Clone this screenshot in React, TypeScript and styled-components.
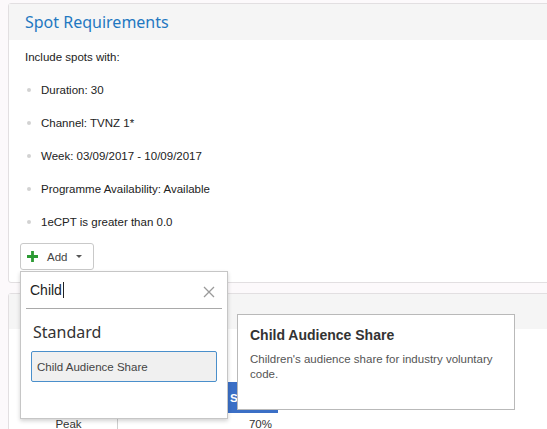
import React from 'react';
import styled, { createGlobalStyle } from 'styled-components';

const GlobalStyle = createGlobalStyle`
  body {
    margin: 0;
    background: #fcf9fb;
    font-family: "Liberation Sans", Arial, sans-serif;
  }
`;

const spotRules = [
  'Duration: 30',
  'Channel: TVNZ 1*',
  'Week: 03/09/2017 - 10/09/2017',
  'Programme Availability: Available',
  '1eCPT is greater than 0.0',
];

// Component
const App: React.FC = () => {
  return (
    <Page>
      <GlobalStyle />
      <Panel height={280}>
        <PanelHeader>
          <Title>Spot Requirements</Title>
        </PanelHeader>
        <PanelBody>
          <Row>Include spots with:</Row>
          {spotRules.map(rule => (
            <Row key={rule}>
              <Bullet />
              {rule}
            </Row>
          ))}
          <AddWrap>
            <AddButton>
              <PlusIcon viewBox="0 0 11 11">
                <path d="M5.5 0V11M0 5.5H11" stroke="#2c9a34" strokeWidth="2.8" />
              </PlusIcon>
              <span>Add</span>
              <Caret />
            </AddButton>
            <Dropdown>
              <SearchRow>
                <SearchText>Child</SearchText>
                <Cursor />
                <CloseIcon viewBox="0 0 12 12">
                  <path d="M1 1L11 11M11 1L1 11" stroke="#9a9a9a" strokeWidth="1.3" />
                </CloseIcon>
              </SearchRow>
              <GroupTitle>Standard</GroupTitle>
              <Option active>Child Audience Share</Option>
              <Tooltip>
                <TooltipTitle>Child Audience Share</TooltipTitle>
                <TooltipText>Children's audience share for industry voluntary code.</TooltipText>
              </Tooltip>
            </Dropdown>
          </AddWrap>
        </PanelBody>
      </Panel>
      <Panel>
        <PanelHeader small>
          <Title>Targets</Title>
        </PanelHeader>
        <Table>
          <HeadCell />
          <HeadCell />
          <HeadCell blue>Share</HeadCell>
          <HeadCell />
          <Cell center>Peak</Cell>
          <Cell divider />
          <Cell right>70%</Cell>
          <Cell />
        </Table>
      </Panel>
    </Page>
  );
};

// Styled Components
const Page = styled.div`
  position: relative;
  height: 429px;
  overflow: hidden;
  padding: 3px 0 0 8px;
  box-sizing: border-box;
`;

const Panel = styled.div<{ height?: number }>`
  width: 570px;
  height: ${({ height }) => (height ? `${height}px` : 'auto')};
  box-sizing: border-box;
  border: 1px solid #e2dfe1;
  border-radius: 3px;
  background: #fff;
  margin-bottom: 10px;
`;

const PanelHeader = styled.div<{ small?: boolean }>`
  height: ${({ small }) => (small ? '35px' : '36px')};
  background: #f5f5f5;
  padding-left: 16px;
  display: flex;
  align-items: center;
`;

const Title = styled.h2`
  margin: 0;
  font-family: "Noto Sans", "Open Sans", sans-serif;
  font-weight: 400;
  font-size: 16px;
  color: #1f78c1;
`;

const PanelBody = styled.div`
  padding: 0 16px;
`;

const Row = styled.div`
  height: 33px;
  display: flex;
  align-items: center;
  font-size: 11.5px;
  color: #222;
`;

const Bullet = styled.span`
  width: 4px;
  height: 4px;
  border-radius: 50%;
  background: #d2d2d2;
  margin: 0 10px 0 2px;
`;

const AddWrap = styled.div`
  position: relative;
  width: 74px;
  margin: 5px 0 0 -5px;
`;

const AddButton = styled.div`
  height: 27px;
  box-sizing: border-box;
  border: 1px solid #c9c9c9;
  border-radius: 3px;
  background: #fff;
  display: flex;
  align-items: center;
  padding-left: 6px;
  font-size: 11.5px;
  color: #444;

  span {
    margin-left: 9px;
  }
`;

const PlusIcon = styled.svg`
  width: 11px;
  height: 11px;
`;

const Caret = styled.span`
  width: 0;
  height: 0;
  border-left: 3px solid transparent;
  border-right: 3px solid transparent;
  border-top: 3px solid #555;
  margin-left: 13px;
`;

const Dropdown = styled.div`
  position: absolute;
  top: 28px;
  left: 0;
  width: 208px;
  height: 148px;
  box-sizing: border-box;
  background: #fff;
  border: 1px solid #c6c6c6;
  box-shadow: 0 2px 4px rgba(0, 0, 0, 0.18);
  padding: 0 5px;
  z-index: 2;
`;

const SearchRow = styled.div`
  height: 36px;
  display: flex;
  align-items: center;
  padding-left: 4px;
  border-bottom: 1px solid #a9a9a9;
`;

const SearchText = styled.span`
  font-size: 14px;
  color: #222;
`;

const Cursor = styled.span`
  width: 1px;
  height: 16px;
  background: #222;
  margin-left: 1px;
`;

const CloseIcon = styled.svg`
  width: 12px;
  height: 12px;
  margin: 3px 7px 0 auto;
`;

const GroupTitle = styled.div`
  font-family: "Noto Sans", "Open Sans", sans-serif;
  font-size: 16px;
  color: #333;
  padding: 12px 0 0 7px;
  line-height: 22px;
`;

const Option = styled.div<{ active?: boolean }>`
  margin: 8px 5px 0 5px;
  height: 31px;
  box-sizing: border-box;
  display: flex;
  align-items: center;
  padding-left: 5px;
  font-size: 11.5px;
  color: #444;
  background: ${({ active }) => (active ? '#f0f0f0' : '#fff')};
  border: 1px solid ${({ active }) => (active ? '#4a8fcb' : 'transparent')};
  border-radius: 2px;
`;

const Tooltip = styled.div`
  position: absolute;
  left: calc(100% + 10px);
  top: 42px;
  width: 278px;
  height: 96px;
  box-sizing: border-box;
  background: #fff;
  border: 1px solid #b9b9b9;
  padding: 12px 12px;
`;

const TooltipTitle = styled.div`
  font-size: 14px;
  font-weight: 700;
  color: #333;
  line-height: 16px;
`;

const TooltipText = styled.div`
  font-size: 11.5px;
  color: #555;
  line-height: 15px;
  margin-top: 9px;
`;

const Table = styled.div`
  display: grid;
  grid-template-columns: 97px 98px 63px 1fr;
  margin: 53px 0 0 11px;
`;

const HeadCell = styled.div<{ blue?: boolean }>`
  height: 31px;
  background: ${({ blue }) => (blue ? '#3b6fc6' : 'transparent')};
  color: #fff;
  font-size: 11.5px;
  font-weight: 700;
  display: flex;
  align-items: center;
  padding-left: 15px;
`;

const Cell = styled.div<{ center?: boolean; right?: boolean; divider?: boolean }>`
  height: 14px;
  line-height: 13px;
  font-size: 11.5px;
  color: #333;
  display: flex;
  align-items: flex-start;
  justify-content: ${({ center, right }) => (center ? 'center' : right ? 'flex-end' : 'flex-start')};
  padding-right: ${({ right }) => (right ? '6px' : '0')};
  border-left: ${({ divider }) => (divider ? '1px solid #cfcfcf' : 'none')};
  margin-top: 5px;
`;

export default App;
